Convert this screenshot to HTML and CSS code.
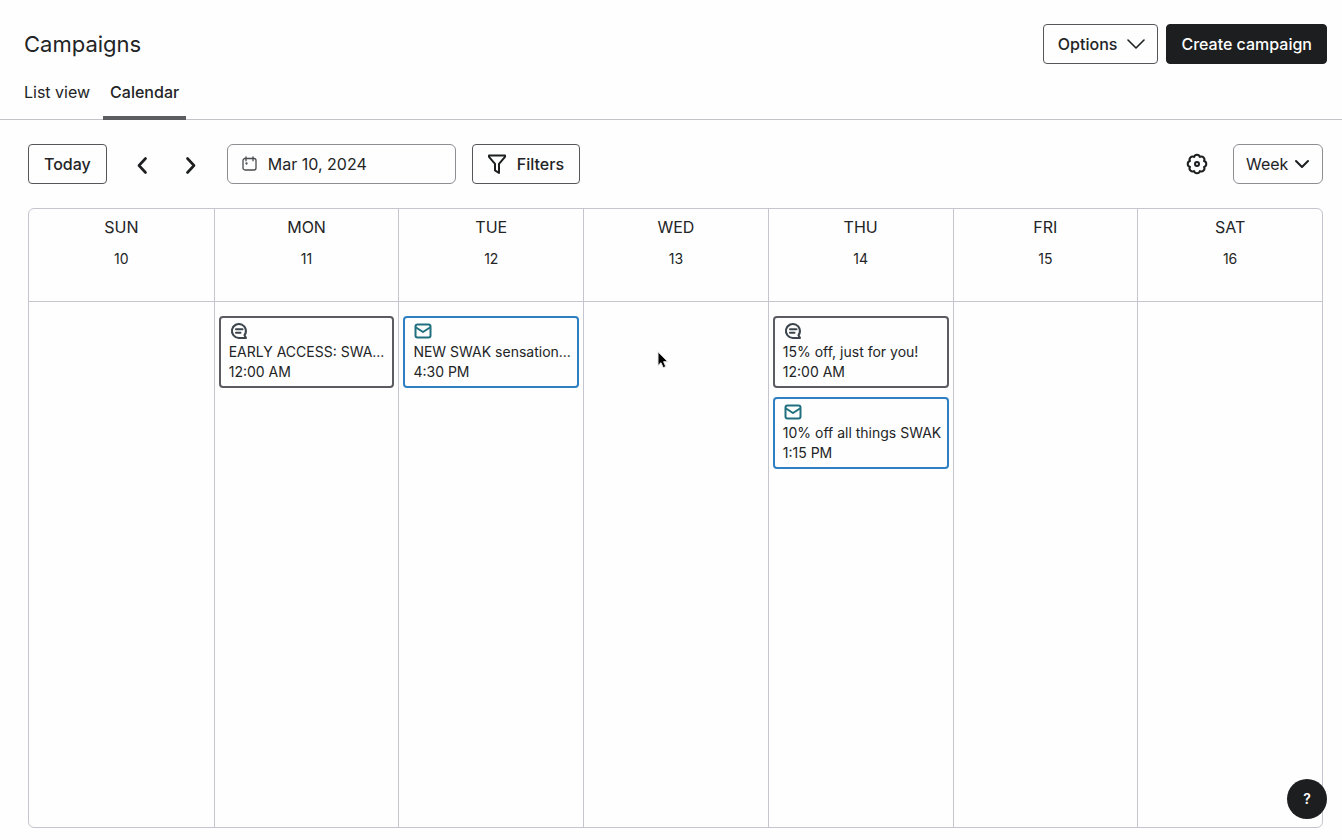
FILE: index.html
```html
<!DOCTYPE html>
<html lang="en">
<head>
<meta charset="utf-8">
<meta name="viewport" content="width=device-width, initial-scale=1">
<title>Campaigns</title>
<link rel="stylesheet" href="styles.css">
</head>
<body>
<svg class="sprite" aria-hidden="true">
  <symbol id="sms" viewBox="0 0 18 18"><path d="M14.500 13.200A7 7 0 1 0 9 16h7l-1.500-2.800C15.500 12 16 10.500 16 9a7 7 0 0 0-2-4.900M6 7.200h6.500M6 10.700h4.500"/></symbol>
  <symbol id="mail" viewBox="0 0 18 18"><rect x="1.500" y="2.500" width="15" height="13" rx="2"/><path d="M2 5.500l7 4.500 7-4.500"/></symbol>
</svg>
<header class="page-header">
  <div class="title-row">
    <h1 class="title">Campaigns</h1>
    <div class="actions">
      <button class="btn" type="button">Options
        <svg class="options-arrow" width="18" height="10" viewBox="0 0 18 10"><path d="M1 1l8 8 8-8"/></svg>
      </button>
      <button class="btn btn-primary" type="button">Create campaign</button>
    </div>
  </div>
  <nav class="tabs">
    <a class="tab" href="#list">List view</a>
    <a class="tab tab-active" href="#calendar" aria-current="page">Calendar</a>
  </nav>
</header>
<main class="content">
  <div class="toolbar">
    <button class="btn" type="button">Today</button>
    <div class="pager">
      <button class="icon-btn" type="button" aria-label="Previous week"><svg width="12" height="20" viewBox="0 0 12 20"><path d="M8.500 4.500L2 11.500l6.500 7"/></svg></button>
      <button class="icon-btn" type="button" aria-label="Next week"><svg width="12" height="20" viewBox="0 0 12 20"><path d="M2.500 4.500l6.500 7-6.500 7"/></svg></button>
    </div>
    <label class="date-field">
      <svg width="16" height="16" viewBox="0 0 16 16"><rect x="1" y="2.500" width="13" height="11.500" rx="2"/><path d="M4 .8v4M11 .8v4"/><circle cx="4.500" cy="7.500" r=".5"/></svg>
      <input class="date-input" type="text" value="Mar 10, 2024" aria-label="Date">
    </label>
    <button class="btn btn-filters" type="button">
      <svg width="20" height="22" viewBox="0 0 20 22"><path d="M2 2.500h16v1.300l-6 7V20l-4-2.600v-6.600l-6-7z"/></svg>Filters
    </button>
    <button class="icon-btn settings" type="button" aria-label="Settings">
      <svg width="22" height="22" viewBox="0 0 22 22"><path d="M8.090 3.980A3 3 0 0 1 13.910 3.980A3 3 0 0 1 18.020 8.090A3 3 0 0 1 18.020 13.910A3 3 0 0 1 13.910 18.020A3 3 0 0 1 8.090 18.020A3 3 0 0 1 3.980 13.910A3 3 0 0 1 3.980 8.090A3 3 0 0 1 8.090 3.980z"/><circle cx="11" cy="11" r="2"/></svg>
    </button>
    <div class="view-select">
      <select class="view-input" aria-label="Calendar range"><option>Week</option></select>
      <svg class="view-arrow" width="16" height="10" viewBox="0 0 16 10"><path d="M2 2l6 6 6-6"/></svg>
    </div>
  </div>
  <table class="calendar">
    <thead>
      <tr>
        <th>SUN<span class="day">10</span></th>
        <th>MON<span class="day">11</span></th>
        <th>TUE<span class="day">12</span></th>
        <th>WED<span class="day">13</span></th>
        <th>THU<span class="day">14</span></th>
        <th>FRI<span class="day">15</span></th>
        <th>SAT<span class="day">16</span></th>
      </tr>
    </thead>
    <tbody>
      <tr>
        <td></td>
        <td><a class="event" href="#early-access"><svg class="event-icon"><use href="#sms"/></svg><span>EARLY ACCESS: SWA...</span><span>12:00 AM</span></a></td>
        <td><a class="event event-email" href="#new-swak"><svg class="event-icon"><use href="#mail"/></svg><span>NEW SWAK sensation...</span><span>4:30 PM</span></a></td>
        <td></td>
        <td>
          <a class="event" href="#fifteen-off"><svg class="event-icon"><use href="#sms"/></svg><span>15% off, just for you!</span><span>12:00 AM</span></a>
          <a class="event event-email" href="#ten-off"><svg class="event-icon"><use href="#mail"/></svg><span>10% off all things SWAK</span><span>1:15 PM</span></a>
        </td>
        <td></td>
        <td></td>
      </tr>
    </tbody>
  </table>
</main>
<button class="help" type="button" aria-label="Help">?</button>
<svg class="pointer" width="12" height="18" viewBox="0 0 12 18" aria-hidden="true"><path d="M1 1v13.500l3-2.800 2.200 5 2.600-1.100-2.200-4.900h4z"/></svg>
</body>
</html>
```
FILE: styles.css
```css
* { box-sizing: border-box; }

body {
  margin: 0;
  min-height: 100vh;
  display: flex;
  flex-direction: column;
  background: #fdfefd;
  color: #232426;
  font: 16px/24px Inter, "Liberation Sans", sans-serif;
}

svg {
  flex: none;
  fill: none;
  stroke: #1d1e20;
  stroke-width: 2;
  stroke-linecap: round;
  stroke-linejoin: round;
}

.sprite { position: absolute; width: 0; height: 0; }

.page-header {
  padding: 24px 15px 0 24px;
  border-bottom: 1px solid #c3c4c7;
}

.title-row,
.actions,
.toolbar,
.pager { display: flex; align-items: center; }

.title-row { justify-content: space-between; }
.title { margin: 0; font-size: 22px; line-height: 40px; font-weight: 400; }
.actions { gap: 8px; }

.btn {
  display: flex;
  align-items: center;
  gap: 10px;
  height: 40px;
  padding: 0 15px;
  border: 1px solid #55565a;
  border-radius: 4px;
  background: transparent;
  color: #232426;
  font: 500 16px/24px Inter, "Liberation Sans", sans-serif;
  white-space: nowrap;
}

.actions .btn { padding: 0 14px; }
.btn-primary { background: #1d1e20; border-color: #1d1e20; color: #fdfefd; }
.options-arrow { margin-right: -2px; stroke-width: 1.6; }

.tabs { display: flex; gap: 6px; margin: 16px 0 -1px -7px; }
.tab {
  padding: 0 7px 12px;
  border-bottom: 4px solid transparent;
  border-radius: 2px 2px 0 0;
  color: #232426;
  text-decoration: none;
}
.tab-active { font-weight: 500; border-bottom-color: #5c5d60; }

.content {
  flex: 1;
  display: flex;
  flex-direction: column;
  padding: 24px 19px 12px 28px;
}

.toolbar { gap: 16px; margin-bottom: 24px; }
.pager { gap: 8px; }
.icon-btn {
  display: flex;
  align-items: center;
  justify-content: center;
  width: 40px;
  height: 40px;
  padding: 0;
  border: 0;
  background: none;
}
.pager svg { stroke-width: 2.6; }

.date-field {
  display: flex;
  align-items: center;
  gap: 10px;
  width: 229px;
  height: 40px;
  padding: 0 14px;
  border: 1px solid #8d8e92;
  border-radius: 6px;
}
.date-field svg { stroke: #4a4b4e; stroke-width: 1.3; }
.date-input {
  flex: 1;
  min-width: 0;
  padding: 0;
  border: 0;
  background: none;
  color: #232426;
  font: 16px/24px Inter, "Liberation Sans", sans-serif;
}

.btn-filters { padding-left: 14px; }
.settings { margin-left: auto; }

.view-select { position: relative; width: 90px; }
.view-input {
  width: 100%;
  height: 40px;
  padding: 0 12px;
  border: 1px solid #8d8e92;
  border-radius: 6px;
  appearance: none;
  background: none;
  color: #232426;
  font: 16px/24px Inter, "Liberation Sans", sans-serif;
}
.view-arrow { position: absolute; right: 13px; top: 15px; pointer-events: none; }

.calendar {
  flex: 1;
  width: 100%;
  table-layout: fixed;
  border-collapse: separate;
  border-spacing: 0;
  border: 1px solid #c4c5cf;
  border-radius: 6px;
}
.calendar th {
  height: 93px;
  padding: 6px 0 0;
  border-bottom: 1px solid #c4c5cf;
  font-weight: 400;
  vertical-align: top;
}
.calendar td { padding: 14px 4px; vertical-align: top; }
.calendar th + th,
.calendar td + td { border-left: 1px solid #c4c5cf; }
.day { display: block; margin-top: 8px; font-size: 14px; }
.calendar tbody tr { height: 100%; }

.event {
  display: flex;
  flex-direction: column;
  height: 72px;
  padding: 4px 8px;
  border: 2px solid #5b5c61;
  border-radius: 4px;
  color: #232426;
  font-size: 14px;
  line-height: 20px;
  text-decoration: none;
  white-space: nowrap;
}
.event + .event { margin-top: 9px; }
.event-email { border-color: #2f80c3; }
.event-icon { width: 18px; height: 18px; margin: 0 0 2px 1px; stroke: #3c454d; }
.event-email .event-icon { stroke: #20707f; }

.help {
  position: fixed;
  right: 15px;
  bottom: 21px;
  width: 40px;
  height: 40px;
  padding: 0;
  border: 0;
  border-radius: 50%;
  background: #1d1e20;
  color: #fdfefd;
  font: 600 14px/20px Inter, "Liberation Sans", sans-serif;
}

.pointer {
  position: absolute;
  left: 657px;
  top: 351px;
  fill: #000;
  stroke: #e8e8e8;
  stroke-width: 1;
  pointer-events: none;
}
```
